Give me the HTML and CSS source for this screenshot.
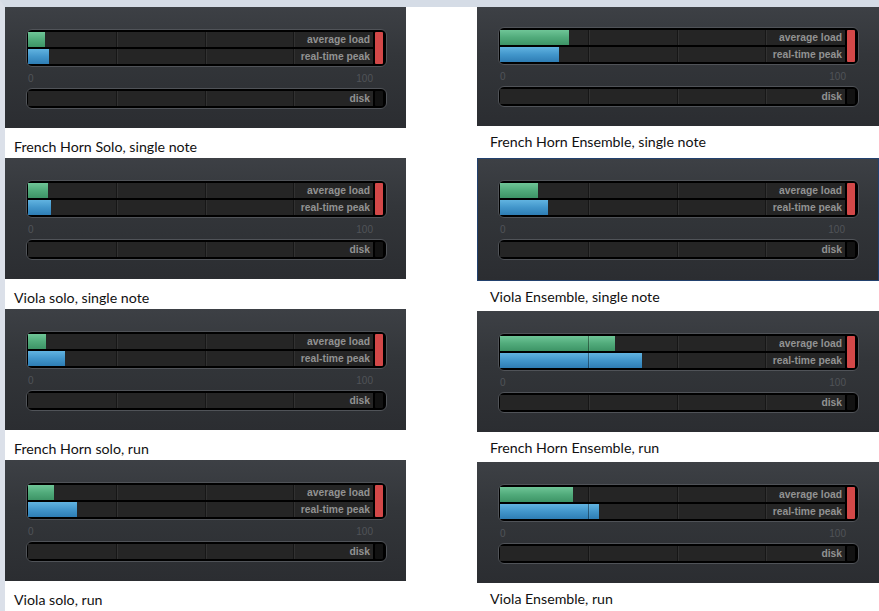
FILE: index.html
```html
<!DOCTYPE html>
<html>
    <head>
        <title>Load meters</title>
        <meta name="viewport" content="width=device-width, initial-scale=1">
        <link rel="stylesheet" href="styles.css">
    </head>
    <body>
        <div id="sheet">
            <div class="column" id="left">
                <div class="shot">
                    <div class="panel">
                        <div class="meter">
                            <div class="rows">
                                <div class="row"><span class="bar green" style="width:17px"></span><span class="label">average load</span></div>
                                <div class="row"><span class="bar blue" style="width:21px"></span><span class="label">real-time peak</span></div>
                            </div>
                            <span class="peak"></span>
                        </div>
                        <div class="scale"><span>0</span><span>100</span></div>
                        <div class="meter disk">
                            <div class="rows">
                                <div class="row"><span class="label">disk</span></div>
                            </div>
                            <span class="peak"></span>
                        </div>
                    </div>
                    <p class="caption">French Horn Solo, single note</p>
                </div>
                <div class="shot">
                    <div class="panel">
                        <div class="meter">
                            <div class="rows">
                                <div class="row"><span class="bar green" style="width:20px"></span><span class="label">average load</span></div>
                                <div class="row"><span class="bar blue" style="width:23px"></span><span class="label">real-time peak</span></div>
                            </div>
                            <span class="peak"></span>
                        </div>
                        <div class="scale"><span>0</span><span>100</span></div>
                        <div class="meter disk">
                            <div class="rows">
                                <div class="row"><span class="label">disk</span></div>
                            </div>
                            <span class="peak"></span>
                        </div>
                    </div>
                    <p class="caption">Viola solo, single note</p>
                </div>
                <div class="shot">
                    <div class="panel">
                        <div class="meter">
                            <div class="rows">
                                <div class="row"><span class="bar green" style="width:18px"></span><span class="label">average load</span></div>
                                <div class="row"><span class="bar blue" style="width:37px"></span><span class="label">real-time peak</span></div>
                            </div>
                            <span class="peak"></span>
                        </div>
                        <div class="scale"><span>0</span><span>100</span></div>
                        <div class="meter disk">
                            <div class="rows">
                                <div class="row"><span class="label">disk</span></div>
                            </div>
                            <span class="peak"></span>
                        </div>
                    </div>
                    <p class="caption">French Horn solo, run</p>
                </div>
                <div class="shot">
                    <div class="panel">
                        <div class="meter">
                            <div class="rows">
                                <div class="row"><span class="bar green" style="width:26px"></span><span class="label">average load</span></div>
                                <div class="row"><span class="bar blue" style="width:49px"></span><span class="label">real-time peak</span></div>
                            </div>
                            <span class="peak"></span>
                        </div>
                        <div class="scale"><span>0</span><span>100</span></div>
                        <div class="meter disk">
                            <div class="rows">
                                <div class="row"><span class="label">disk</span></div>
                            </div>
                            <span class="peak"></span>
                        </div>
                    </div>
                    <p class="caption">Viola solo, run</p>
                </div>
            </div>

            <div class="column" id="right">
                <div class="shot">
                    <div class="panel short">
                        <div class="meter">
                            <div class="rows">
                                <div class="row"><span class="bar green" style="width:69px"></span><span class="label">average load</span></div>
                                <div class="row"><span class="bar blue" style="width:59px"></span><span class="label">real-time peak</span></div>
                            </div>
                            <span class="peak"></span>
                        </div>
                        <div class="scale"><span>0</span><span>100</span></div>
                        <div class="meter disk">
                            <div class="rows">
                                <div class="row"><span class="label">disk</span></div>
                            </div>
                            <span class="peak"></span>
                        </div>
                    </div>
                    <p class="caption">French Horn Ensemble, single note</p>
                </div>
                <div class="shot tall">
                    <div class="panel selected">
                        <div class="meter">
                            <div class="rows">
                                <div class="row"><span class="bar green" style="width:38px"></span><span class="label">average load</span></div>
                                <div class="row"><span class="bar blue" style="width:48px"></span><span class="label">real-time peak</span></div>
                            </div>
                            <span class="peak"></span>
                        </div>
                        <div class="scale"><span>0</span><span>100</span></div>
                        <div class="meter disk">
                            <div class="rows">
                                <div class="row"><span class="label">disk</span></div>
                            </div>
                            <span class="peak"></span>
                        </div>
                    </div>
                    <p class="caption">Viola Ensemble, single note</p>
                </div>
                <div class="shot">
                    <div class="panel">
                        <div class="meter">
                            <div class="rows">
                                <div class="row"><span class="bar green" style="width:115px"></span><span class="label">average load</span></div>
                                <div class="row"><span class="bar blue" style="width:142px"></span><span class="label">real-time peak</span></div>
                            </div>
                            <span class="peak"></span>
                        </div>
                        <div class="scale"><span>0</span><span>100</span></div>
                        <div class="meter disk">
                            <div class="rows">
                                <div class="row"><span class="label">disk</span></div>
                            </div>
                            <span class="peak"></span>
                        </div>
                    </div>
                    <p class="caption">French Horn Ensemble, run</p>
                </div>
                <div class="shot">
                    <div class="panel">
                        <div class="meter">
                            <div class="rows">
                                <div class="row"><span class="bar green" style="width:73px"></span><span class="label">average load</span></div>
                                <div class="row"><span class="bar blue" style="width:99px"></span><span class="label">real-time peak</span></div>
                            </div>
                            <span class="peak"></span>
                        </div>
                        <div class="scale"><span>0</span><span>100</span></div>
                        <div class="meter disk">
                            <div class="rows">
                                <div class="row"><span class="label">disk</span></div>
                            </div>
                            <span class="peak"></span>
                        </div>
                    </div>
                    <p class="caption">Viola Ensemble, run</p>
                </div>
            </div>
        </div>
    </body>
</html>
```

FILE: styles.css
```css
* {
    box-sizing: border-box;
}

html, body {
    margin: 0;
    background: #fff;
    font-family: "Liberation Sans", Arial, sans-serif;
}

#sheet {
    display: flex;
    min-height: 100vh;
    border-top: 7px solid #d5dce6;
    border-left: 5px solid #dbe0e9;
}

.column {
    width: 401px;
}

#right {
    margin-left: 71px;
    width: 402px;
}

.shot {
    height: 151px;
}

.shot.tall {
    height: 153px;
}

.panel {
    height: 121px;
    padding: 22px 19px 0 21px;
    background: linear-gradient(#3d4045, #33363a 40%, #2b2d31);
}

.panel.short {
    height: 119px;
    padding-top: 20px;
}

.panel.selected {
    height: 123px;
    border: 1px solid #22416e;
    padding: 21px 19px 0 20px;
}

/* meter frame */
.meter {
    display: flex;
    gap: 2px;
    width: 361px;
    padding: 2px 3px 2px 1px;
    background: #000;
    border: 1px solid #505358;
    border-radius: 6px;
}

.rows {
    display: flex;
    flex-direction: column;
    gap: 2px;
    width: 345px;
}

.row {
    position: relative;
    display: flex;
    align-items: center;
    height: 15px;
    background: #252525;
}

.row::after {
    content: "";
    position: absolute;
    top: 0;
    left: 0;
    right: 0;
    bottom: 0;
    background: linear-gradient(90deg,
        transparent 88px, rgba(0,0,0,.4) 88px 89px, rgba(255,255,255,.06) 89px 90px,
        transparent 90px 177px, rgba(0,0,0,.4) 177px 178px, rgba(255,255,255,.06) 178px 179px,
        transparent 179px 265px, rgba(0,0,0,.4) 265px 266px, rgba(255,255,255,.06) 266px 267px,
        transparent 267px);
}

.bar {
    height: 100%;
}

.green {
    background: linear-gradient(#6fc597, #51ab7b 50%, #3d9466);
}

.blue {
    background: linear-gradient(#61b3e0, #4296cb 50%, #2e7db4);
}

.label {
    position: relative;
    z-index: 1;
    margin-left: auto;
    padding-right: 3px;
    font-size: 10.3px;
    font-weight: bold;
    color: #929292;
}

.peak {
    width: 8px;
    background: #d34848;
    border-radius: 1px;
}

.disk .peak {
    background: #121212;
}

.scale {
    display: flex;
    justify-content: space-between;
    align-items: center;
    height: 21px;
    padding: 1px 14px 0 2px;
    font-size: 10px;
    color: #505358;
}

.caption {
    margin: 0;
    padding: 10px 0 0 9px;
    line-height: 18px;
    font-family: Lato, "Liberation Sans", sans-serif;
    font-size: 14.2px;
    color: #111;
}

#right .caption {
    padding: 7px 0 0 13px;
}
```
